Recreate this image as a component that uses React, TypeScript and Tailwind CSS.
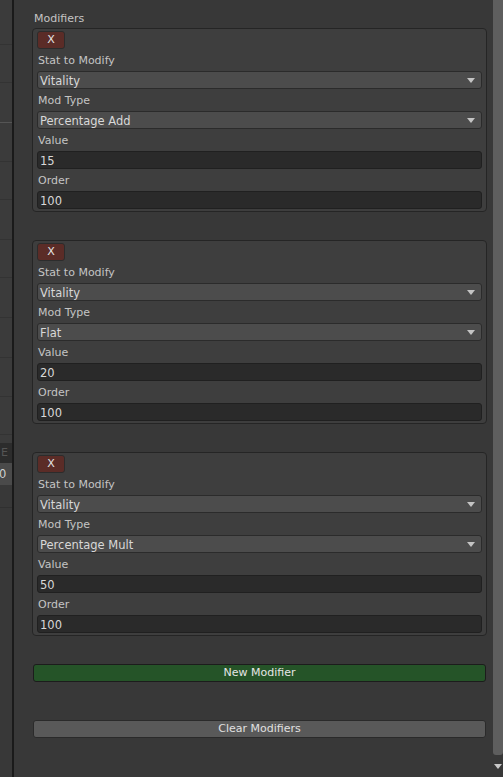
import React from "react";

const font = { fontFamily: '"DejaVu Sans", "Liberation Sans", sans-serif' };

function Arrow() {
  return (
    <svg width="8" height="5" viewBox="0 0 8 5" className="shrink-0">
      <path d="M0 0 L8 0 L4 5 Z" fill="#c4c4c4" />
    </svg>
  );
}

function Label({ text }: { text: string }) {
  return (
    <div className="h-[22px] leading-[23px] pl-[1px] text-[#c4c4c4] text-[11px]">{text}</div>
  );
}

function Dropdown({ value }: { value: string }) {
  return (
    <div className="h-[18px] flex items-center justify-between bg-[#4c4c4c] border border-[#2b2b2b] rounded-[3px] pl-[2px] pr-[6px] text-[11.5px] text-[#d8d8d8]">
      <span className="leading-[16px] pt-[1px]">{value}</span>
      <Arrow />
    </div>
  );
}

function Input({ value }: { value: string }) {
  return (
    <div className="h-[18px] flex items-center bg-[#2a2a2a] border border-[#202020] rounded-[3px] pl-[2px] text-[11.5px] text-[#d8d8d8]">
      <span className="leading-[16px] pt-[1px]">{value}</span>
    </div>
  );
}

function Card({ stat, mod, value, order }: { stat: string; mod: string; value: string; order: string }) {
  return (
    <div className="border border-[#252525] rounded-[4px] bg-[#3e3e3e] px-[4px] pt-[2px] pb-[2px]">
      <div className="w-[28px] h-[18px] bg-[#5b2c27] border border-[#2c2c2c] rounded-[3px] flex items-center justify-center text-[11px] text-[#e4e4e4]">
        X
      </div>
      <Label text="Stat to Modify" />
      <Dropdown value={stat} />
      <Label text="Mod Type" />
      <Dropdown value={mod} />
      <Label text="Value" />
      <Input value={value} />
      <Label text="Order" />
      <Input value={order} />
    </div>
  );
}

const stripLines = [45, 83, 123, 162, 200, 240, 278, 318, 358, 397, 435];

function LeftStrip() {
  const rows: React.ReactNode[] = [];
  let prev = 0;
  stripLines.forEach((y, i) => {
    rows.push(
      <div
        key={i}
        className={i === 2 ? "shrink-0 border-b border-[#555555]" : "shrink-0 border-b border-[#333333]"}
        style={{ height: y - prev }}
      />
    );
    prev = y;
  });
  return (
    <div className="w-[12px] shrink-0 flex flex-col bg-[#3b3b3b] overflow-hidden">
      {rows}
      <div className="shrink-0" style={{ height: 443 - prev }} />
      <div className="h-[20px] shrink-0 bg-[#2c2c2c] text-[11px] leading-[20px] text-[#555555] pl-[1px]">E</div>
      <div className="h-[22px] shrink-0 bg-[#4a4a4a] text-[11.5px] leading-[22px] text-[#d0d0d0] -ml-[1px]">0</div>
      <div className="h-[23px] shrink-0 bg-[#383838] border-b border-[#303030]" />
      <div className="flex-1 bg-[#383838]" />
    </div>
  );
}

export default function App() {
  return (
    <div className="w-[503px] h-[777px] flex overflow-hidden bg-[#383838]" style={font}>
      <LeftStrip />
      <div className="w-[2px] shrink-0 bg-[#1a1a1a]" />
      <div className="flex-1 flex flex-col pl-[18px] pr-[6px] pt-[10px]">
        <div className="h-[18px] leading-[18px] text-[11px] text-[#c4c4c4] pl-[2px]">Modifiers</div>
        <div className="flex flex-col gap-[28px]">
          <Card stat="Vitality" mod="Percentage Add" value="15" order="100" />
          <Card stat="Vitality" mod="Flat" value="20" order="100" />
          <Card stat="Vitality" mod="Percentage Mult" value="50" order="100" />
        </div>
        <div className="mt-[28px] mx-[1px] h-[18px] bg-[#255428] border border-[#1c1c1c] rounded-[3px] flex items-center justify-center text-[11px] text-[#e6e6e6]">
          New Modifier
        </div>
        <div className="mt-[38px] mx-[1px] h-[18px] bg-[#595959] border border-[#2a2a2a] rounded-[3px] flex items-center justify-center text-[11px] text-[#e0e0e0]">
          Clear Modifiers
        </div>
      </div>
      <div className="w-[10px] shrink-0 flex flex-col items-center bg-[#383838]">
        <div className="w-[10px] h-[755px] bg-[#5e5e5e] rounded-b-[3px]" />
        <div className="flex-1 flex items-center justify-center">
          <svg width="8" height="5" viewBox="0 0 8 5">
            <path d="M0 0 L8 0 L4 5 Z" fill="#c8c8c8" />
          </svg>
        </div>
      </div>
    </div>
  );
}
